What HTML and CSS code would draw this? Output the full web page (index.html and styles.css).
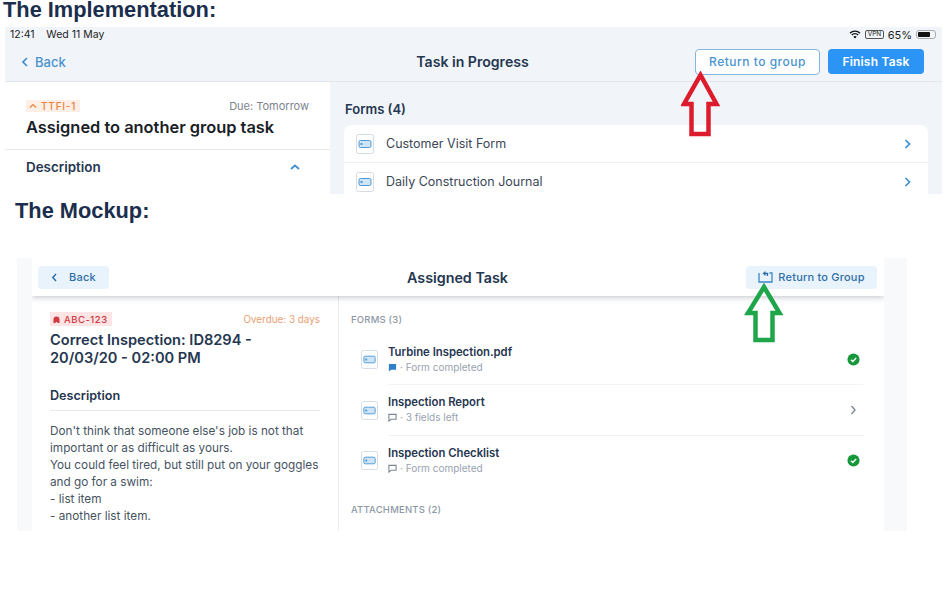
FILE: index.html
```html
<!DOCTYPE html>
<html lang="en">
<head>
    <meta charset="UTF-8">
    <title>Return to group: implementation and mockup</title>
    <link rel="stylesheet" href="styles.css">
</head>
<body>
    <svg class="defs" width="0" height="0">
        <symbol id="form" viewBox="0 0 18 20">
            <rect x="0.5" y="0.5" width="17" height="19" rx="2" fill="#fff" stroke="#d5dbe3"/>
            <rect x="3" y="6.5" width="12" height="7" rx="1.5" fill="#cfe4f7" stroke="#4d9ad8"/>
            <rect x="4.5" y="9" width="2" height="2" fill="#4d9ad8"/>
        </symbol>
        <symbol id="check" viewBox="0 0 14 14">
            <circle cx="7" cy="7" r="6.5" fill="#16983a"/>
            <path d="M4.300 7.200l2 1.900 3.500-3.600" fill="none" stroke="#fff" stroke-width="1.600"/>
        </symbol>
        <symbol id="note" viewBox="0 0 10 10">
            <path d="M1 1.500h8v5.500H3.500L1 9z" fill="none" stroke="#7b8591" stroke-width="1.200"/>
        </symbol>
    </svg>

    <h1 class="caption caption-impl">The Implementation:</h1>
    <section class="impl">
        <div class="status">
            <span>12:41&nbsp;&nbsp;&nbsp; Wed 11 May</span>
            <span class="status-right">
                <svg width="12" height="9" viewBox="0 0 12 9"><path d="M1 3.200a7 7 0 0 1 10 0M2.800 5a4.500 4.500 0 0 1 6.400 0" fill="none" stroke="#111" stroke-width="1.300"/><path d="M6 8.600L4.300 6.700a2.500 2.500 0 0 1 3.400 0z" fill="#111"/></svg>
                <span class="vpn">VPN</span>
                <span>65%</span>
                <span class="battery"><span class="battery-fill"></span></span>
            </span>
        </div>
        <header class="impl-nav">
            <a class="impl-back">
                <svg width="8" height="10" viewBox="0 0 8 10"><path d="M6 1L2 5l4 4" fill="none" stroke="#3c8fd0" stroke-width="1.700"/></svg>
                Back
            </a>
            <h2 class="impl-title">Task in Progress</h2>
            <div class="impl-actions">
                <button class="btn-outline">Return to group</button>
                <button class="btn-solid">Finish Task</button>
            </div>
        </header>
        <div class="impl-body">
            <aside class="impl-side">
                <div class="impl-head">
                    <div class="meta-row">
                        <span class="tag-orange">
                            <svg width="8" height="6" viewBox="0 0 8 6"><path d="M1 4.500L4 1.500l3 3" fill="none" stroke="#e8843f" stroke-width="1.200"/></svg>
                            TTFI-1
                        </span>
                        <span class="due">Due: Tomorrow</span>
                    </div>
                    <h3 class="impl-task">Assigned to another group task</h3>
                </div>
                <div class="impl-desc">
                    <span>Description</span>
                    <svg width="10" height="6" viewBox="0 0 10 6"><path d="M1 5l4-3.500L9 5" fill="none" stroke="#3c8fd0" stroke-width="1.700"/></svg>
                </div>
            </aside>
            <div class="impl-main">
                <h4 class="impl-forms">Forms (4)</h4>
                <div class="impl-card">
                    <div class="impl-row">
                        <svg class="impl-icon"><use href="#form"/></svg>
                        <span class="impl-name">Customer Visit Form</span>
                        <svg class="impl-next" width="7" height="10" viewBox="0 0 7 10"><path d="M1.500 1l4 4-4 4" fill="none" stroke="#3c8fd0" stroke-width="1.700"/></svg>
                    </div>
                    <div class="impl-row">
                        <svg class="impl-icon"><use href="#form"/></svg>
                        <span class="impl-name">Daily Construction Journal</span>
                        <svg class="impl-next" width="7" height="10" viewBox="0 0 7 10"><path d="M1.500 1l4 4-4 4" fill="none" stroke="#3c8fd0" stroke-width="1.700"/></svg>
                    </div>
                </div>
            </div>
        </div>
        <svg class="arrow arrow-red" width="42" height="68" viewBox="0 0 42 68">
            <path d="M19.500 4L35.500 33H27.500V63H10.500V33H3z" fill="none" stroke="#dc1c2c" stroke-width="4.500"/>
        </svg>
    </section>

    <h1 class="caption caption-mock">The Mockup:</h1>
    <section class="mock">
        <div class="mock-page">
            <header class="mock-nav">
                <button class="btn-soft btn-back">
                    <svg width="7" height="9" viewBox="0 0 7 9"><path d="M5 1L1.800 4.500 5 8" fill="none" stroke="#2f6fa8" stroke-width="1.500"/></svg>
                    <span class="back-label">Back</span>
                </button>
                <h2 class="mock-title">Assigned Task</h2>
                <button class="btn-soft btn-return">
                    <svg width="15" height="12" viewBox="0 0 15 12"><path d="M1 2v9h13V2h-2.500" fill="none" stroke="#3c86c6" stroke-width="1.300"/><path d="M9.500 5V2.500H6" fill="none" stroke="#2f6fa8" stroke-width="1.300"/><path d="M7.500 0L4.500 2.500 7.500 5z" fill="#2f6fa8"/></svg>
                    Return to Group
                </button>
            </header>
            <div class="mock-body">
                <aside class="mock-side">
                    <div class="meta-row">
                        <span class="tag-red">
                            <svg width="7" height="7" viewBox="0 0 7 7"><path d="M0.500 7V3.500a3 3 0 0 1 6 0V7H5L3.500 5.800 2 7z" fill="#d0393f"/></svg>
                            ABC-123
                        </span>
                        <span class="overdue">Overdue: 3 days</span>
                    </div>
                    <h3 class="mock-task">Correct Inspection: ID8294 -<br>20/03/20 - 02:00 PM</h3>
                    <h4 class="mock-desc-title">Description</h4>
                    <p class="mock-desc">Don't think that someone else's job is not that important or as difficult as yours.<br>You could feel tired, but still put on your goggles and go for a swim:<br>- list item<br>- another list item.</p>
                </aside>
                <div class="mock-main">
                    <h4 class="section-label">FORMS (3)</h4>
                    <div class="mock-row">
                        <svg class="mock-icon"><use href="#form"/></svg>
                        <div class="mock-text">
                            <div class="mock-name">Turbine Inspection.pdf</div>
                            <div class="mock-sub">
                                <svg width="9" height="9" viewBox="0 0 10 10"><path d="M1 1h8v6.500H3.500L1 9.500z" fill="#2f80c8"/></svg>
                                <span>· Form completed</span>
                            </div>
                        </div>
                        <svg class="mock-status"><use href="#check"/></svg>
                    </div>
                    <div class="mock-row">
                        <svg class="mock-icon"><use href="#form"/></svg>
                        <div class="mock-text">
                            <div class="mock-name">Inspection Report</div>
                            <div class="mock-sub">
                                <svg width="9" height="9"><use href="#note"/></svg>
                                <span>· 3 fields left</span>
                            </div>
                        </div>
                        <svg class="mock-next" width="7" height="10" viewBox="0 0 7 10"><path d="M1.500 1l3.500 4-3.500 4" fill="none" stroke="#7b8591" stroke-width="1.300"/></svg>
                    </div>
                    <div class="mock-row">
                        <svg class="mock-icon"><use href="#form"/></svg>
                        <div class="mock-text">
                            <div class="mock-name">Inspection Checklist</div>
                            <div class="mock-sub">
                                <svg width="9" height="9"><use href="#note"/></svg>
                                <span>· Form completed</span>
                            </div>
                        </div>
                        <svg class="mock-status"><use href="#check"/></svg>
                    </div>
                    <h4 class="section-label section-attach">ATTACHMENTS (2)</h4>
                </div>
            </div>
        </div>
        <svg class="arrow arrow-green" width="42" height="62" viewBox="0 0 42 62">
            <path d="M20 4L35.500 30H28.500V57H11.500V30H4z" fill="none" stroke="#1fa64a" stroke-width="4.500"/>
        </svg>
    </section>
</body>
</html>
```

FILE: styles.css
```css
* {
    box-sizing: border-box;
}

body {
    margin: 0;
    background: #fff;
    font-family: Inter, "Noto Sans", sans-serif;
    color: #253650;
}

h1, h2, h3, h4, p {
    margin: 0;
}

button {
    font-family: inherit;
    border: none;
}

.defs {
    position: absolute;
}

.caption {
    font-family: "Liberation Sans", Arial, sans-serif;
    font-weight: 700;
    font-size: 21.8px;
    color: #1b2e4d;
}

.caption-impl {
    line-height: 20px;
    height: 27px;
    padding-left: 3px;
    white-space: nowrap;
}

.caption-mock {
    line-height: 22px;
    height: 64px;
    padding: 6px 0 0 15px;
}

.arrow {
    position: absolute;
}

.arrow-red {
    left: 676px;
    top: 44px;
}

.arrow-green {
    left: 727px;
    top: 25px;
}

/* top part, the ipad screenshot */
.impl {
    position: relative;
    width: 937px;
    height: 167px;
    margin-left: 5px;
    background: #f1f4f8;
    overflow: hidden;
}

.status {
    display: flex;
    justify-content: space-between;
    align-items: center;
    height: 15px;
    padding: 0 6px 0 5px;
    font-size: 10.500px;
    color: #1c1f24;
}

.status-right {
    display: flex;
    align-items: center;
    gap: 4px;
    font-size: 11px;
}

.vpn {
    border: 1px solid #555;
    border-radius: 2px;
    font-size: 6.500px;
    line-height: 7px;
    padding: 0 1.500px;
}

.battery {
    width: 20px;
    height: 9px;
    border: 1px solid #aaa;
    border-radius: 3px;
    padding: 1px;
}

.battery-fill {
    display: block;
    width: 12px;
    height: 100%;
    background: #111;
    border-radius: 1px;
}

.impl-nav {
    display: grid;
    grid-template-columns: 1fr auto 1fr;
    align-items: center;
    height: 40px;
    padding: 0 18px 0 16px;
    border-bottom: 1px solid #e2e6eb;
}

.impl-back {
    display: flex;
    align-items: center;
    gap: 6px;
    font-size: 13px;
    font-weight: 500;
    color: #4a93cf;
}

.impl-title {
    font-size: 14.100px;
    font-weight: 600;
    white-space: nowrap;
}

.impl-actions {
    display: flex;
    justify-content: flex-end;
    align-items: center;
    gap: 8px;
}

.btn-outline {
    width: 125px;
    height: 26px;
    background: #fff;
    border: 1px solid #86b6dc;
    border-radius: 4px;
    font-size: 12px;
    font-weight: 500;
    letter-spacing: 0.500px;
    color: #4a93cf;
}

.btn-solid {
    width: 96px;
    height: 25px;
    background: #2b94f5;
    border-radius: 4px;
    font-size: 12px;
    font-weight: 600;
    letter-spacing: 0.200px;
    color: #fff;
}

.impl-body {
    display: flex;
}

.impl-side {
    width: 325px;
    height: 120px;
    background: #fff;
}

.impl-head {
    height: 68px;
    padding: 17px 21px 0;
    border-bottom: 1px solid #e8ebef;
}

.meta-row {
    display: flex;
    justify-content: space-between;
    align-items: center;
}

.tag-orange {
    display: flex;
    align-items: center;
    gap: 4px;
    height: 12px;
    padding: 0 4px 0 3px;
    background: #fdeee6;
    font-size: 10px;
    font-weight: 500;
    letter-spacing: 0.800px;
    color: #e8843f;
}

.due {
    font-size: 11px;
    color: #7c838c;
}

.impl-task {
    margin-top: 4px;
    font-size: 16.400px;
    line-height: 20px;
    font-weight: 600;
    color: #1a1e27;
}

.impl-desc {
    display: flex;
    justify-content: space-between;
    align-items: center;
    padding: 9px 30px 0 21px;
    font-size: 13.400px;
    font-weight: 600;
}

.impl-main {
    flex: 1;
    padding: 19px 14px 0;
}

.impl-forms {
    margin-bottom: 8px;
    padding-left: 1px;
    font-size: 13px;
    line-height: 16px;
    font-weight: 600;
}

.impl-card {
    background: #fff;
    border-radius: 8px;
}

.impl-row {
    display: flex;
    align-items: center;
    height: 38px;
    padding: 0 17px 0 12px;
    border-bottom: 1px solid #eef0f3;
}

.impl-icon {
    width: 18px;
    height: 20px;
    margin-right: 12px;
}

.impl-name {
    flex: 1;
    font-size: 12.500px;
    color: #3b4757;
}

/* bottom part, the mockup */
.mock {
    position: relative;
    width: 890px;
    height: 273px;
    margin-left: 17px;
    padding: 0 23px 0 15px;
    background: #f8f9fa;
}

.mock-page {
    height: 100%;
    background: #fff;
}

.mock-nav {
    display: grid;
    grid-template-columns: 1fr auto 1fr;
    align-items: center;
    height: 38px;
    padding: 0 7px 0 6px;
    box-shadow: 0 1px 6px rgba(40, 50, 70, 0.3);
    clip-path: inset(0 0 -10px 0);
}

.btn-soft {
    display: flex;
    align-items: center;
    justify-content: center;
    height: 23px;
    background: #e9f3fc;
    border-radius: 4px;
    font-size: 11px;
    font-weight: 500;
    color: #2f6fa8;
}

.btn-back {
    width: 71px;
    gap: 11px;
}

.back-label {
    letter-spacing: 0.200px;
}

.btn-return {
    justify-self: end;
    width: 131px;
    gap: 5px;
    letter-spacing: 0.200px;
}

.mock-title {
    font-size: 14.300px;
    font-weight: 600;
    white-space: nowrap;
}

.mock-body {
    display: flex;
    height: 235px;
}

.mock-side {
    width: 307px;
    padding: 16px 18px 0;
    border-right: 1px solid #e8ebef;
}

.tag-red {
    display: flex;
    align-items: center;
    gap: 4px;
    height: 14px;
    padding: 0 4px 0 3px;
    background: #fde4e5;
    font-size: 9.500px;
    font-weight: 500;
    letter-spacing: 0.500px;
    color: #d0393f;
}

.overdue {
    font-size: 9.900px;
    color: #e8a074;
}

.mock-task {
    margin-top: 6px;
    font-size: 14.600px;
    line-height: 17.500px;
    font-weight: 600;
}

.mock-desc-title {
    margin-top: 21px;
    padding-bottom: 6px;
    border-bottom: 1px solid #e8ebef;
    font-size: 12.600px;
    line-height: 16px;
    font-weight: 600;
}

.mock-desc {
    margin-top: 12px;
    font-size: 11.750px;
    line-height: 17px;
    color: #46535f;
}

.mock-main {
    flex: 1;
    padding: 18px 22px 0 12px;
}

.section-label {
    font-size: 9.500px;
    line-height: 11px;
    font-weight: 500;
    letter-spacing: 0.200px;
    color: #8d98a7;
}

.section-attach {
    margin-top: 17.500px;
}

.mock-row {
    display: flex;
    align-items: center;
    height: 50.500px;
    padding-right: 2px;
}

.mock-row:first-of-type {
    margin-top: 9.500px;
}

.mock-icon {
    width: 17px;
    height: 19px;
    margin: 0 10px;
    flex: none;
}

.mock-text {
    flex: 1;
    align-self: stretch;
    display: flex;
    flex-direction: column;
    justify-content: center;
    border-bottom: 1px solid #f1f3f5;
    margin-right: -2px;
}

.mock-row:last-of-type .mock-text {
    border-bottom: none;
}

.mock-name {
    font-size: 11.300px;
    line-height: 14px;
    font-weight: 600;
}

.mock-sub {
    display: flex;
    align-items: center;
    gap: 3px;
    margin-top: 2px;
    font-size: 10px;
    line-height: 13px;
    color: #98a2af;
}

.mock-status {
    width: 13px;
    height: 13px;
    margin-left: -14px;
    margin-right: 0;
}

.mock-next {
    margin-left: -12px;
    margin-right: 3px;
}
```
